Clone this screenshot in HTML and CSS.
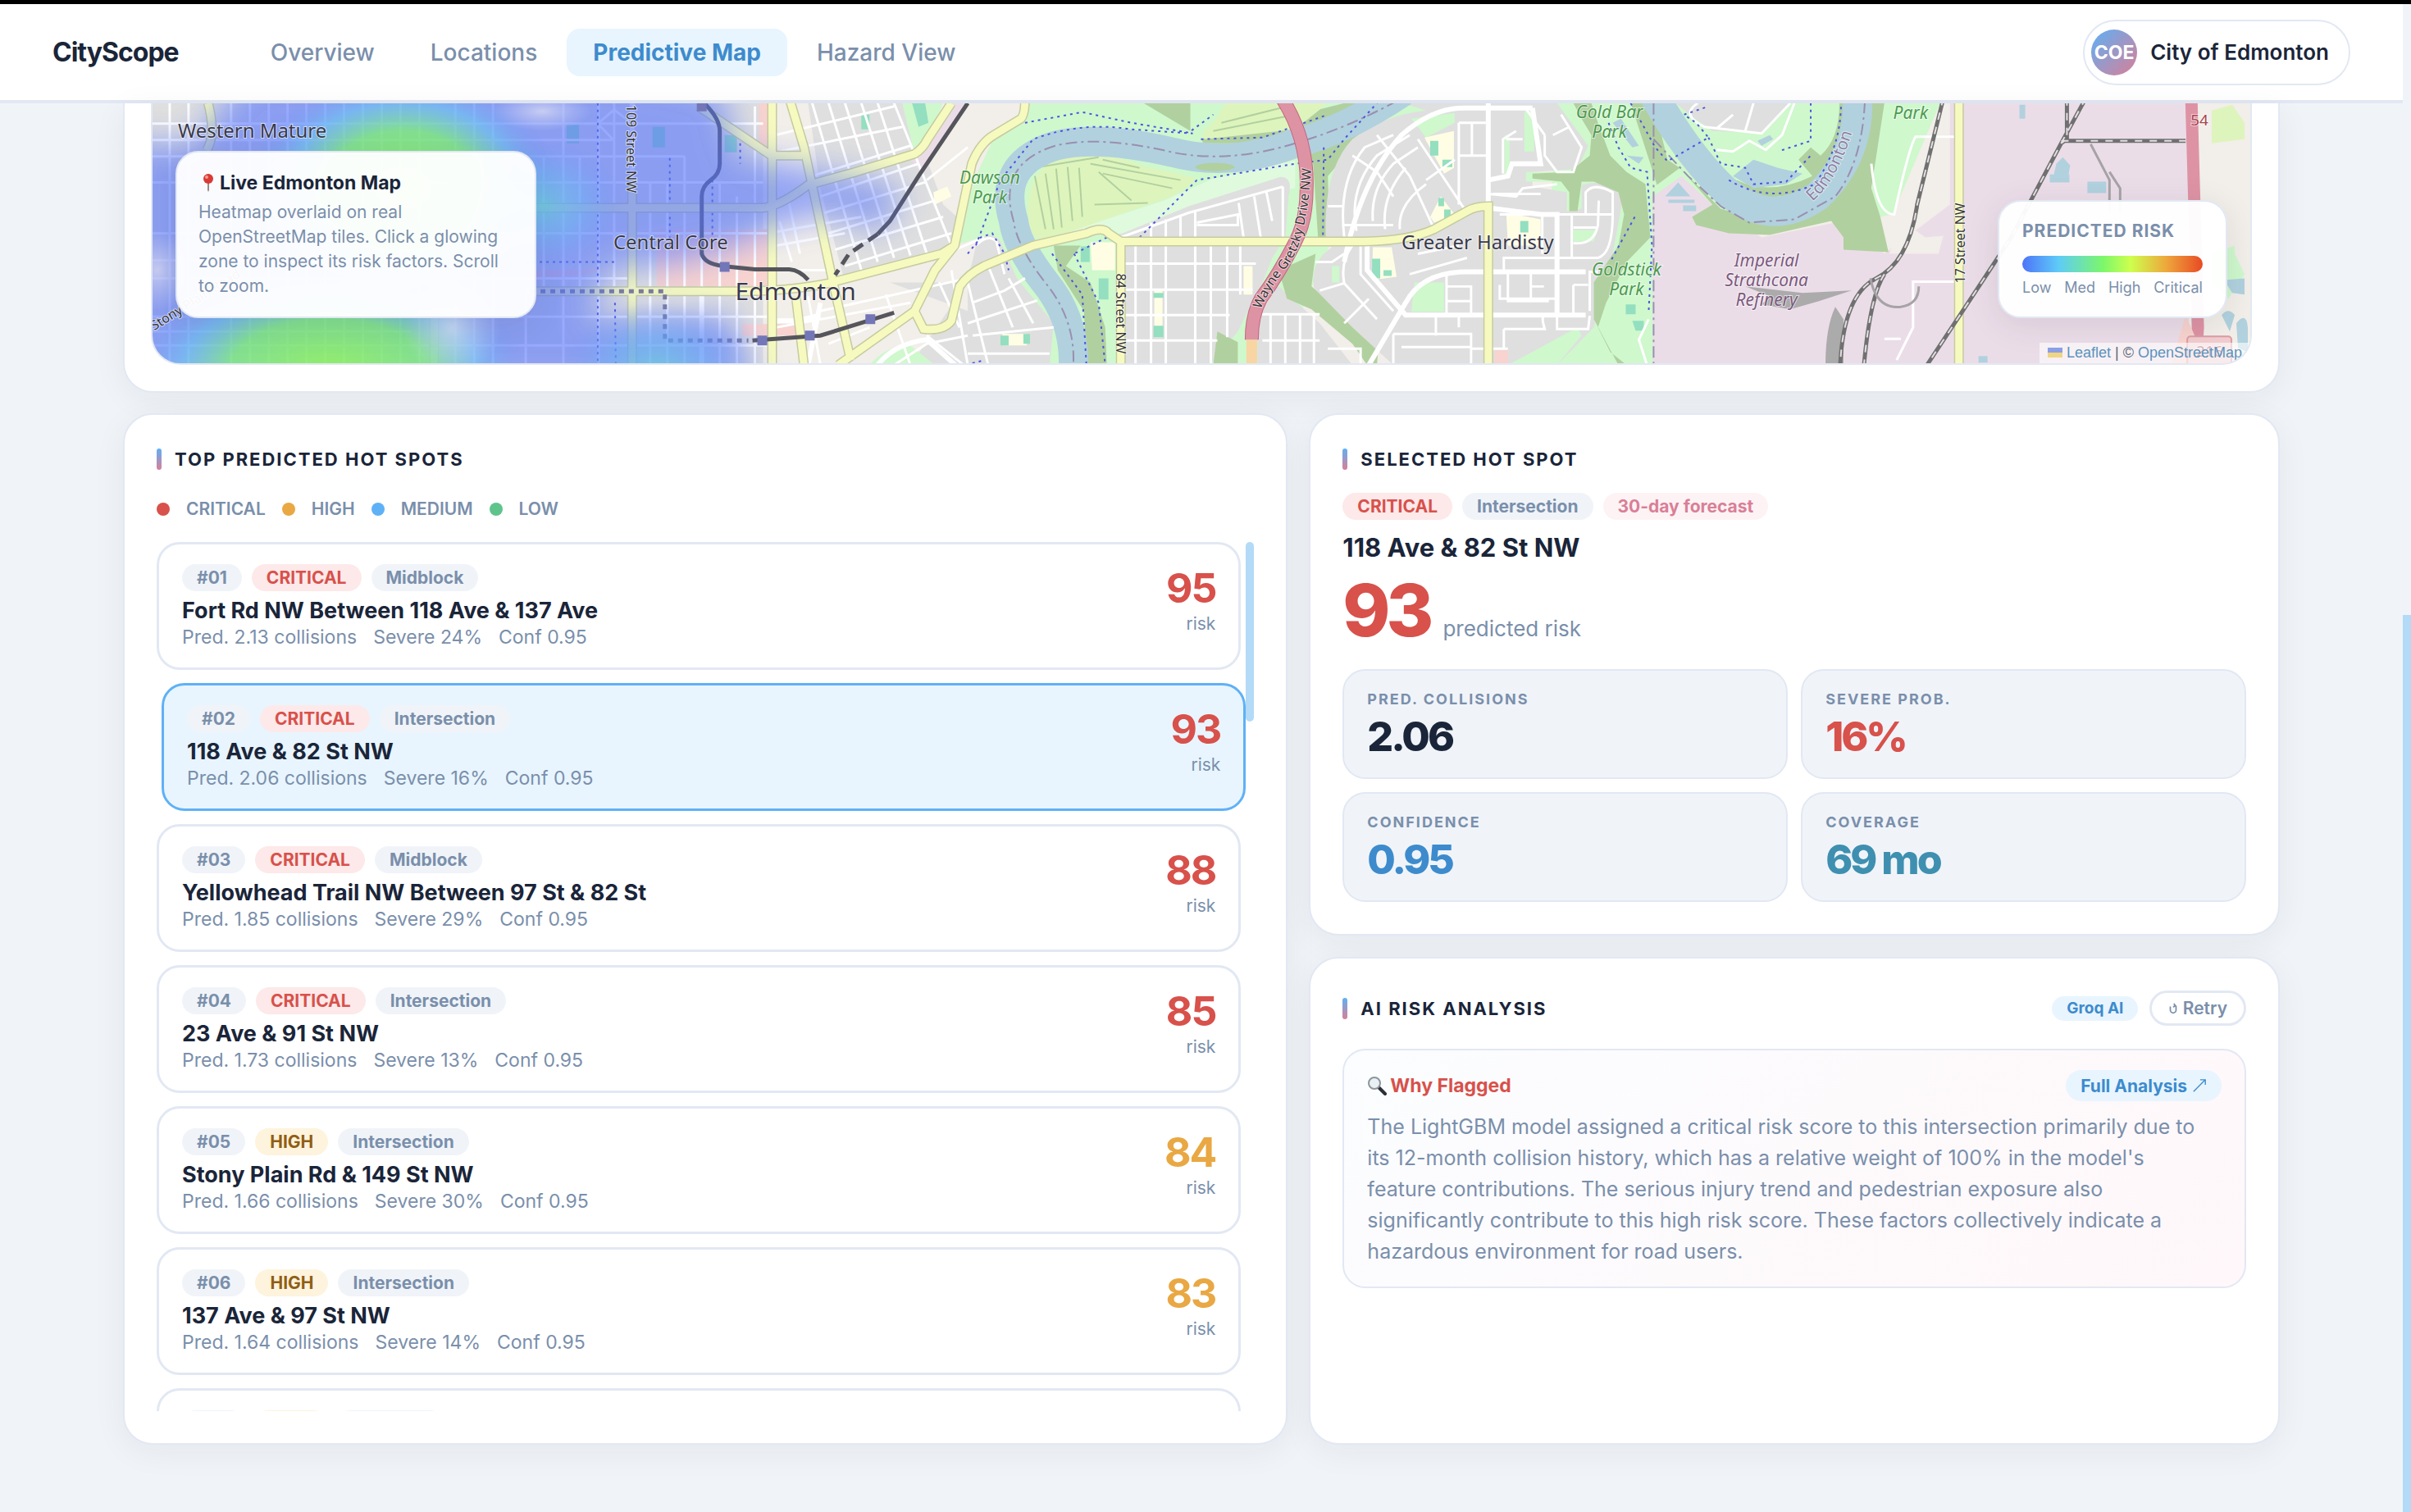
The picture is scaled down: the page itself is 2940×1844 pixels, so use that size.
FILE: index.html
```html
<!DOCTYPE html>
<html lang="en">
<head>
    <meta charset="UTF-8">
    <meta name="viewport" content="width=device-width, initial-scale=1">
    <title>CityScope - Predictive Map</title>
    <link rel="stylesheet" href="styles.css">
</head>
<body>

<div class="page">
    <!-- top bar -->
    <header class="topbar">
        <a class="logo" href="#">CityScope</a>
        <nav class="nav">
            <a href="#overview">Overview</a>
            <a href="#locations">Locations</a>
            <a class="active" href="#predictive">Predictive Map</a>
            <a href="#hazard">Hazard View</a>
        </nav>
        <button class="account"><span class="avatar">COE</span>City of Edmonton</button>
    </header>

    <main class="content">
        <!-- map -->
        <section class="card map-card">
            <div class="map">
                <svg class="map-canvas" viewBox="184 126 2563 318" preserveAspectRatio="xMidYMid slice">
                    <defs>
                        <radialGradient id="hot">
                            <stop offset="0" stop-color="#93ff4a" stop-opacity=".8"/>
                            <stop offset=".5" stop-color="#80fb68" stop-opacity=".7"/>
                            <stop offset=".75" stop-color="#66cdf2" stop-opacity=".5"/>
                            <stop offset="1" stop-color="#6f92f8" stop-opacity="0"/>
                        </radialGradient>
                        <radialGradient id="cool">
                            <stop offset="0" stop-color="#62d8d8" stop-opacity=".6"/>
                            <stop offset=".5" stop-color="#66b8f4" stop-opacity=".4"/>
                            <stop offset="1" stop-color="#6f92f8" stop-opacity="0"/>
                        </radialGradient>
                        <radialGradient id="pale">
                            <stop offset="0" stop-color="#f0ecf2" stop-opacity=".6"/>
                            <stop offset="1" stop-color="#d9d9f6" stop-opacity="0"/>
                        </radialGradient>
                        <filter id="soft" x="-20%" y="-20%" width="140%" height="140%"><feGaussianBlur stdDeviation="20"/></filter>
                        <g id="primary">
                            <path d="M941 120V446M640 254H930Q950 252 985 226L1040 211L1115 188Q1125 182 1131 170L1160 126M640 356H898Q960 356 1010 346L1148 310L1164 300M962 120L980 180L1015 343L1037 440M851 130L940 190L978 190M970 362L980 446M770 220V446M1022 446L1115 380L1140 330L1164 300L1185 200Q1195 175 1212 165L1245 145Q1250 140 1250 120M1115 380L1126 402Q1150 405 1160 392L1170 350Q1180 335 1200 325L1260 300L1325 285Q1345 276 1352 285L1367 295H1665Q1720 294 1750 280L1790 258Q1800 252 1816 252V446M1367 295V446M252 126Q262 165 250 184M528 388V446M2391 120V446"/>
                        </g>
                        <g id="rail">
                            <path d="M2372 120L2340 250Q2330 320 2290 340Q2250 360 2246 446M2546 120L2516 175L2455 290L2352 446M2523 120V170L2516 175M2300 335Q2283 360 2275 446M2516 172H2668"/>
                        </g>
                        <g id="drive">
                            <path d="M1564 120Q1596 170 1594 230Q1594 270 1580 296Q1560 335 1538 365Q1527 385 1527 415"/>
                        </g>
                        <path id="drive-label" d="M1538 378Q1550 350 1574 321Q1596 285 1600 200"/>
                        <path id="river-label" d="M2212 246Q2244 220 2264 150"/>
                    </defs>

                    <rect class="land" x="184" y="126" width="2563" height="318"/>
                    <path class="homes" d="M184 126H930V446H184Z"/>
                    <path class="homes" d="M985 126H1105L1150 250L1178 275L1164 300L1030 345L1000 230Z"/>
                    <path class="homes" d="M1180 345H1085L1180 380V446H1110Z"/>
                    <path class="commerce" d="M925 126H938V185H925ZM740 330L640 345V330ZM800 280H935V350H800ZM905 396H970V410H905ZM940 396H968V410H942Z"/>
                    <path class="industry" d="M1160 126H1180L1150 170L1125 215L1108 190Z"/>

                    <!-- river valley -->
                    <path class="park" d="M1254 126H1762L1690 160L1640 200L1622 300L1560 446H1180L1182 330L1196 290L1164 300L1190 215L1212 168L1250 145Z"/>
                    <path class="park" d="M1100 126H1150L1125 180H1113ZM1060 446Q1080 422 1110 422L1140 446Z"/>
                    <path class="meadow" d="M1280 290L1420 245L1480 218L1580 196V230L1450 255L1370 285Z"/>
                    <path class="homes" d="M1362 288L1450 252L1562 216Q1578 216 1572 240L1568 290L1552 315L1540 345L1510 405L1476 446H1370V300Z"/>
                    <path class="homes" d="M1180 345L1190 300Q1205 278 1220 295L1240 340L1285 395L1280 446H1180ZM1534 360L1560 350L1610 395L1650 446H1534Z"/>
                    <path class="wood" d="M1395 126H1452V160ZM1690 126H1640L1465 170L1468 175H1590L1602 200L1608 290H1622L1620 215L1650 180L1690 140ZM1285 300H1318L1300 325L1330 345L1348 400L1350 446H1325L1322 380L1290 330ZM1560 330L1605 310L1600 350L1630 375L1682 420L1680 446H1668L1650 420L1600 378L1570 365ZM1485 405L1510 418V446H1480Z"/>
                    <path class="golf" d="M1255 290Q1245 210 1290 195Q1340 180 1395 203L1458 217Q1450 235 1400 250L1300 285L1270 292ZM1495 126H1620L1580 158L1470 170Q1460 165 1480 150Z"/>
                    <path class="furrow" d="M1262 215L1275 280M1275 212L1285 280M1288 206L1295 278M1302 204L1308 270M1316 205L1320 265M1262 205L1340 192M1340 210L1380 245M1330 200L1440 220M1345 212L1430 230M1335 250L1400 248M1345 195L1390 205M1480 160L1580 140M1490 150L1570 130"/>

                    <!-- eastern neighbourhoods -->
                    <path class="park" d="M1900 126H2130V446H1880Z"/>
                    <path class="homes" d="M1618 300Q1612 210 1650 170Q1690 140 1740 135L1712 126H1900L1938 178L1925 206L1870 210V228L1912 235V258L1930 255V226Q1970 215 1980 245L1968 310L1945 400L1900 446H1700L1650 400L1603 352Q1598 320 1625 302Z"/>
                    <path class="park" d="M1860 136H1872V185H1860ZM1836 165H1842V215H1836ZM1722 145L1775 138V150L1740 168ZM1726 345H1762V381H1722ZM1918 281H1950L1945 295H1920ZM1625 325H1634V345H1625ZM1862 210H1925V222H1862ZM1840 446L1900 446L1930 410L1925 400Z"/>
                    <path class="school" d="M1738 168L1774 160V205L1762 212ZM1745 265L1758 240L1775 262L1750 272ZM1838 260L1880 268V300H1840ZM1675 302H1698L1704 338L1674 342ZM1330 296H1360V330H1332ZM1408 355H1418V412H1408ZM1517 325H1528V360H1517ZM1222 408H1252V422H1226ZM1138 235L1155 228L1160 240L1140 250Z"/>
                    <path class="pitch" d="M1745 172H1755V190H1745ZM1760 195H1772V204H1760ZM1755 242H1762V252H1755ZM1762 256H1770V268H1762ZM1855 270H1865V284H1855ZM1318 301H1329V320H1318ZM1340 340H1352V366H1340ZM1407 358H1419V364H1407ZM1407 398H1419V412H1407ZM1674 316H1684V340H1674ZM1688 330H1698V337H1688ZM1112 126H1128L1132 150L1120 155ZM1220 410H1230V422H1220ZM1248 408H1256V420H1248ZM690 152H705V175H690ZM795 155H810V180H795ZM883 165H898V186H883ZM1050 140H1060V158H1050ZM1984 372H1996V384H1984ZM1992 392H2006V404H1996ZM2194 126H2208V150H2200ZM2214 148H2226V158H2214Z"/>
                    <path class="wood" d="M1920 126H1942L1950 150L1965 190L1985 210L2008 225L2014 290L1985 320L1960 370L1950 400L1965 430L1985 446H1975L1945 390V345L1975 300L1982 262L1975 235L1945 222H1930L1925 258H1915V235L1905 222L1870 218V212L1915 210L1940 190L1942 165L1930 145ZM1990 126H2018L2035 195L2050 205L2022 226L2014 200Z"/>
                    <path class="industry" d="M2017 240L2052 215L2090 250L2150 290L2250 270L2300 310L2380 250V120H2672V446H2017Z"/>
                    <path class="park" d="M2300 126H2368L2310 262L2295 265L2284 240L2290 160Z"/>
                    <path class="wood" d="M2050 205L2090 250L2065 265L2070 275L2110 285L2160 287L2235 270L2250 290V305L2305 308L2295 265L2284 230L2300 126H2270Q2265 200 2230 240L2150 270L2100 255Z"/>
                    <path class="park" d="M2045 126H2250Q2252 200 2205 234Q2150 250 2110 220Z"/>
                    <path class="wood" d="M2110 225Q2160 255 2210 228Q2250 190 2250 126H2245Q2245 170 2222 190L2210 180L2195 195L2212 215Q2160 240 2120 220Z"/>
                    <path class="homes" d="M2045 126H2185L2150 162L2090 160L2062 140Z"/>
                    <path class="land" d="M2322 270L2350 290L2372 288L2366 310H2306ZM2693 120H2747V446H2693Z"/>
                    <path class="golf" d="M2700 135L2725 128L2740 150V170L2700 175Z"/>
                    <path class="park" d="M2700 310L2728 300V310L2740 335L2720 365L2700 345Z"/>

                    <!-- water -->
                    <path class="river" d="M1712 112Q1640 160 1580 175Q1500 205 1430 186Q1340 165 1287 178Q1215 200 1236 270Q1240 300 1273 343Q1312 390 1309 450"/>
                    <path class="river" d="M2016 112Q2060 190 2105 232Q2160 280 2218 240Q2272 190 2267 112"/>
                    <path class="water" d="M2048 223L2063 240H2032ZM2036 244H2068V248H2036ZM2054 251H2070V258H2054ZM1968 150L1978 145L2000 178L1992 180ZM1985 190L2006 192L2000 200ZM2145 172L2160 165L2164 170L2150 178ZM2115 215L2140 195L2170 205L2200 212L2180 225L2140 230ZM2510 200L2518 192L2527 202L2525 213H2507ZM2502 213H2526V223H2502ZM2548 222H2571V236H2548ZM2465 128H2472V145H2465ZM2415 435H2426V443H2415ZM2715 342L2740 340V360L2725 358ZM2712 385Q2720 375 2728 385L2722 405ZM2730 395Q2742 380 2744 400V430L2732 425Z"/>
                    <ellipse class="wood" cx="1482" cy="204" rx="24" ry="5"/>
                    <path class="border-line" d="M1705 123Q1640 158 1580 175Q1500 200 1430 186Q1340 165 1287 178Q1215 200 1236 270Q1240 300 1273 343Q1312 390 1309 446M2018 126V446M2018 170L2060 215L2100 252L2135 272L2190 268L2240 240Q2272 200 2276 126"/>

                    <!-- streets -->
                    <path class="street" d="M184 151H930M184 171H745M184 191H834M184 223H930M184 285H935L1050 265M184 318H600M184 340H770M184 387H935M184 422H935M205 126V446M228 126V446M280 126V446M303 126V446M326 126V446M349 126V446M372 126V446M395 126V446M418 126V446M441 126V446M464 126V446M487 126V446M510 126V446M554 126V446M577 126V446M600 126V446M640 356V446M662 191V356M686 126V446M706 191V356M729 126V446M748 126V350M792 223V446M813 223V446M834 191V446M855 240V446M877 223V446M898 240V446M920 130V446M184 405H500M728 151L748 134L770 151M728 151L748 172V223"/>
                    <path class="street" d="M945 165L1090 130M950 185L1100 155M990 215L1110 178M1000 240L1120 200M1005 260L1130 222M1010 285L1140 245M1018 305L1150 265M1030 325L1160 285M946 300L1030 285M990 126L1050 330M1010 126L1070 320M1030 126L1090 315M1050 126L1110 312M1070 126L1130 310M1090 126L1160 300M960 240L975 310M950 270L965 320M946 330H1010M946 400L1110 370M1000 380L1180 340M985 362L1000 446M1010 420L1060 400M1080 360L1110 446M1130 320L1200 290M1145 345L1170 400M1160 330L1180 446M1090 446L1130 420L1180 410M1130 220L1180 180"/>
                    <path class="street" d="M1180 395L1265 367M1185 370L1225 355L1250 340M1186 410L1285 400M1180 345L1205 446M1205 325L1235 400M1230 340L1260 395M1195 330L1235 310M1190 300Q1205 285 1215 295L1225 335M1180 432H1280M1130 410L1175 446"/>
                    <path class="street" d="M1367 322H1532M1367 354H1528M1367 385H1500M1367 416H1485M1385 290V446M1404 272V446M1422 268V446M1458 258V446M1477 300V446M1497 300V412M1513 300V360M1440 265V290M1367 290L1450 260L1565 228M1511 248L1517 290M1530 240L1538 290M1545 235L1552 270M1565 228V290M1460 272L1510 262V275H1460M1535 384H1610M1550 384V446M1568 384V446M1586 384V446M1603 384V446M1540 416H1610M1620 426H1660V446"/>
                    <path class="street" d="M1640 290Q1632 220 1665 180L1700 165M1655 282Q1645 230 1680 190L1720 165M1675 270Q1672 230 1700 200L1730 180M1690 280Q1685 240 1715 205M1708 280Q1705 250 1740 225M1680 165L1720 215M1700 240L1680 210L1650 190M1720 215L1750 280M1730 170L1790 260M1740 220L1775 195M1640 275H1700M1620 252H1640M1605 320H1625L1640 310M1610 355L1640 346L1680 390M1640 346Q1635 320 1650 300M1660 300V335L1700 380M1640 395L1670 365"/>
                    <path class="street" d="M1780 150V250M1780 150H1816M1796 150V190M1780 190H1816M1838 170H1858M1834 212V170L1850 160M1822 237H1880M1816 237L1850 240L1858 230L1900 225M1885 165V190L1900 210H1920L1930 180L1905 140M1885 165L1860 130M1895 165L1915 155M1900 262V382M1830 262L1882 262M1882 262V310M1918 262V315M1900 262H1968M1920 278H1950M1920 297Q1945 300 1950 275L1951 245M1935 262V235Q1945 222 1968 235V262Q1968 310 1950 315H1835V330M1950 332H1940V380M1830 348V365H1900M1765 334V386M1765 350H1795V386M1765 368H1795M1840 332V368H1890M1868 332V368M1868 350H1884M1920 348V385M1920 348H1938M1700 408V446M1700 408H1795V446M1752 386V410M1780 386V400M1795 426H1840M1710 424H1795M1835 402V425M1835 402H1885Q1880 386 1885 386M1900 386V402H1938L1940 386M1720 335L1790 315M1730 310L1780 300M2072 126Q2050 140 2080 155L2150 163L2185 126M2095 157L2115 140M2130 160L2140 126"/>
                    <path class="street wide" d="M1816 120V252M1640 320Q1660 220 1710 165Q1750 130 1790 132H1870M1870 132L1880 200H1845L1840 215L1816 220M1816 254L1880 262H1900V386M1668 290V330L1715 385H1935M1670 446L1715 370Q1735 332 1790 332H1935M941 392H970L1000 385M985 446L1000 370M1070 446Q1090 420 1130 415L1165 446M855 350V446M770 126V220"/>
                    <path class="street" d="M2095 183L2115 185L2135 172L2155 183L2175 165L2190 126M2284 200Q2290 262 2312 262Q2330 180 2338 167L2391 167M2391 344H2335V400L2315 440M2300 414H2320M2012 390L2000 415L2010 446"/>
                    <path class="works" d="M2130 350L2200 358L2260 355L2220 368L2185 378L2150 372L2160 362ZM2228 446Q2228 400 2240 375L2250 390V446Z"/>
                    <path class="path-dots" d="M1250 150L1320 137L1380 150L1450 162L1480 140M1190 300L1205 260L1220 220L1260 170Q1320 148 1380 158L1455 163M1465 170L1540 168L1620 140M1390 290L1440 240L1460 220L1580 200L1620 195L1640 170L1680 126M1283 310L1320 360L1325 446M1310 310L1340 370L1348 446M1350 290L1310 310M1615 180L1614 290M1963 150L1975 180L1990 205L2010 210L2016 300L2012 380M1990 126L2020 180L2035 197L2085 168L2070 150L2055 140L2085 130M2085 168L2100 200L2130 205L2140 225L2180 222L2210 190M2110 220Q2160 250 2215 225Q2247 180 2247 126M2210 126V172L2170 185M1995 265L1965 320M748 320H640M816 300V190M749 370L750 446M728 126V446M868 220V300M902 175V200M1178 446L1200 440M1180 310L1196 290L1210 285L1225 310L1230 330"/>

                    <!-- main roads -->
                    <use href="#primary" class="road-edge"/>
                    <use href="#primary" class="road"/>
                    <use href="#drive" class="drive-edge"/>
                    <use href="#drive" class="drive"/>
                    <path class="secondary" d="M1527 415V446"/>
                    <path class="drive" d="M2675 120L2683 400L2680 446"/>
                    <path class="commerce" d="M2668 385L2695 446H2650ZM1824 428H1840V446H1824Z"/>
                    <use href="#rail" class="rail"/>
                    <use href="#rail" class="rail-dash"/>
                    <path class="siding" d="M2552 176L2575 220V260M2575 210L2588 230V260M2283 340Q2290 378 2320 375Q2342 372 2342 350"/>
                    <path class="lrt" d="M858 126Q877 145 877 160V200Q877 212 866 220Q855 228 855 240V310Q858 322 880 325L920 329H962Q975 330 985 342M1180 126L1120 215L1085 270L1070 286M917 416L1000 410L1090 382"/>
                    <path class="lrt dashed" d="M1070 286L1035 310L1018 336"/>
                    <path class="lrt dots" d="M646 356H810V416H912"/>

                    <!-- heat -->
                    <g class="heat">
                        <path filter="url(#soft)" d="M300 90H800L880 110L900 190L960 200L1000 210L1100 230L1080 280L1000 260L925 285L900 300L830 320L740 330L720 390L890 385L920 470H150V170L230 180Z"/>
                    </g>
                    <ellipse fill="url(#hot)" cx="490" cy="230" rx="190" ry="140"/>
                    <ellipse fill="url(#hot)" cx="400" cy="450" rx="240" ry="120"/>
                    <ellipse fill="url(#cool)" cx="800" cy="450" rx="120" ry="80"/>
                    <ellipse fill="url(#cool)" cx="660" cy="250" rx="100" ry="80"/>
                    <ellipse fill="url(#pale)" cx="660" cy="136" rx="60" ry="24"/>
                    <ellipse fill="url(#pale)" cx="550" cy="400" rx="60" ry="60"/>
                    <ellipse fill="url(#pale)" cx="190" cy="330" rx="40" ry="50"/>
                    <path class="station" d="M849 126H861V136H849ZM877 320H889V332H877ZM923 410H935V422H923ZM981 404H993V416H981ZM1055 384H1067V396H1055Z"/>

                    <!-- labels -->
                    <text class="place" x="215" y="168">Western Mature</text>
                    <text class="place" x="747" y="305">Central Core</text>
                    <text class="place big" x="896" y="367">Edmonton</text>
                    <text class="place" x="1710" y="305">Greater Hardisty</text>
                    <text class="street-name" transform="translate(763 128) rotate(90)">109 Street NW</text>
                    <text class="street-name" transform="translate(1361 334) rotate(90)">84 Street NW</text>
                    <text class="street-name" transform="translate(2398 346) rotate(-90)">17 Street NW</text>
                    <text class="street-name" transform="translate(186 404) rotate(-32)">Stony Plain Road</text>
                    <text class="street-name"><textPath href="#drive-label">Wayne Gretzky Drive NW</textPath></text>
                    <text class="river-name"><textPath href="#river-label">Edmonton</textPath></text>
                    <g class="park-name">
                        <text x="1207" y="224">Dawson</text>
                        <text x="1207" y="248">Park</text>
                        <text x="1964" y="144">Gold Bar</text>
                        <text x="1964" y="168">Park</text>
                        <text x="1985" y="337">Goldstick</text>
                        <text x="1985" y="361">Park</text>
                        <text x="2332" y="145">Park</text>
                    </g>
                    <g class="works-name">
                        <text x="2156" y="326">Imperial</text>
                        <text x="2156" y="350">Strathcona</text>
                        <text x="2156" y="374">Refinery</text>
                    </g>
                    <text class="shield" x="2674" y="153">54</text>
                    <rect class="shield-box" x="2670" y="411" width="54" height="40" rx="4"/>
                    <text class="shield" x="2681" y="436">216</text>
                </svg>

                <div class="map-panel map-info">
                    <h3>
                        <svg class="pin" viewBox="0 0 12 22"><path d="M5 9H7V20L6 22L5 20Z" fill="#9b8a86"/><circle cx="6" cy="6" r="6" fill="#d93a35"/><circle cx="4" cy="4" r="2" fill="#f59a93"/></svg>
                        Live Edmonton Map
                    </h3>
                    <p>Heatmap overlaid on real OpenStreetMap tiles. Click a glowing zone to inspect its risk factors. Scroll to zoom.</p>
                </div>
                <div class="map-panel map-legend">
                    <h3>Predicted Risk</h3>
                    <div class="ramp"></div>
                    <div class="ramp-labels"><span>Low</span><span>Med</span><span>High</span><span>Critical</span></div>
                </div>
                <div class="attribution">
                    <svg class="flag" viewBox="0 0 18 12"><path fill="#8b9fe4" d="M0 0H18V6H0Z"/><path fill="#f0d583" d="M0 6H18V12H0Z"/></svg>
                    <a href="#leaflet">Leaflet</a> | © <a href="#osm">OpenStreetMap</a>
                </div>
            </div>
        </section>

        <div class="columns">
            <!-- hot spot list -->
            <section class="card spots">
                <h2>Top Predicted Hot Spots</h2>
                <div class="levels">
                    <i class="dot red"></i><span>CRITICAL</span>
                    <i class="dot amber"></i><span>HIGH</span>
                    <i class="dot blue"></i><span>MEDIUM</span>
                    <i class="dot green"></i><span>LOW</span>
                </div>
                <div class="scroller">
                    <ul class="spot-list">
                        <li>
                            <button class="spot">
                                <span class="info">
                                    <span class="pills"><span class="pill">#01</span><span class="pill critical">CRITICAL</span><span class="pill">Midblock</span></span>
                                    <span class="name">Fort Rd NW Between 118 Ave &amp; 137 Ave</span>
                                    <span class="facts"><span>Pred. 2.13 collisions</span><span>Severe 24%</span><span>Conf 0.95</span></span>
                                </span>
                                <span class="score critical"><b>95</b>risk</span>
                            </button>
                        </li>
                        <li>
                            <button class="spot selected">
                                <span class="info">
                                    <span class="pills"><span class="pill">#02</span><span class="pill critical">CRITICAL</span><span class="pill">Intersection</span></span>
                                    <span class="name">118 Ave &amp; 82 St NW</span>
                                    <span class="facts"><span>Pred. 2.06 collisions</span><span>Severe 16%</span><span>Conf 0.95</span></span>
                                </span>
                                <span class="score critical"><b>93</b>risk</span>
                            </button>
                        </li>
                        <li>
                            <button class="spot">
                                <span class="info">
                                    <span class="pills"><span class="pill">#03</span><span class="pill critical">CRITICAL</span><span class="pill">Midblock</span></span>
                                    <span class="name">Yellowhead Trail NW Between 97 St &amp; 82 St</span>
                                    <span class="facts"><span>Pred. 1.85 collisions</span><span>Severe 29%</span><span>Conf 0.95</span></span>
                                </span>
                                <span class="score critical"><b>88</b>risk</span>
                            </button>
                        </li>
                        <li>
                            <button class="spot">
                                <span class="info">
                                    <span class="pills"><span class="pill">#04</span><span class="pill critical">CRITICAL</span><span class="pill">Intersection</span></span>
                                    <span class="name">23 Ave &amp; 91 St NW</span>
                                    <span class="facts"><span>Pred. 1.73 collisions</span><span>Severe 13%</span><span>Conf 0.95</span></span>
                                </span>
                                <span class="score critical"><b>85</b>risk</span>
                            </button>
                        </li>
                        <li>
                            <button class="spot">
                                <span class="info">
                                    <span class="pills"><span class="pill">#05</span><span class="pill high">HIGH</span><span class="pill">Intersection</span></span>
                                    <span class="name">Stony Plain Rd &amp; 149 St NW</span>
                                    <span class="facts"><span>Pred. 1.66 collisions</span><span>Severe 30%</span><span>Conf 0.95</span></span>
                                </span>
                                <span class="score high"><b>84</b>risk</span>
                            </button>
                        </li>
                        <li>
                            <button class="spot">
                                <span class="info">
                                    <span class="pills"><span class="pill">#06</span><span class="pill high">HIGH</span><span class="pill">Intersection</span></span>
                                    <span class="name">137 Ave &amp; 97 St NW</span>
                                    <span class="facts"><span>Pred. 1.64 collisions</span><span>Severe 14%</span><span>Conf 0.95</span></span>
                                </span>
                                <span class="score high"><b>83</b>risk</span>
                            </button>
                        </li>
                        <li>
                            <button class="spot">
                                <span class="info">
                                    <span class="pills"><span class="pill">#07</span><span class="pill high">HIGH</span><span class="pill">Midblock</span></span>
                                </span>
                            </button>
                        </li>
                    </ul>
                    <div class="list-thumb"></div>
                </div>
            </section>

            <div class="side">
                <!-- selected spot -->
                <section class="card detail">
                    <h2>Selected Hot Spot</h2>
                    <div class="pills"><span class="pill critical">CRITICAL</span><span class="pill">Intersection</span><span class="pill forecast">30-day forecast</span></div>
                    <h3 class="detail-name">118 Ave &amp; 82 St NW</h3>
                    <p class="detail-score"><b>93</b>predicted risk</p>
                    <dl class="metrics">
                        <div><dt>Pred. Collisions</dt><dd>2.06</dd></div>
                        <div><dt>Severe Prob.</dt><dd class="red-text">16%</dd></div>
                        <div><dt>Confidence</dt><dd class="blue-text">0.95</dd></div>
                        <div><dt>Coverage</dt><dd class="teal-text">69 mo</dd></div>
                    </dl>
                </section>

                <!-- ai analysis -->
                <section class="card analysis">
                    <div class="analysis-head">
                        <h2>AI Risk Analysis</h2>
                        <span class="badge">Groq AI</span>
                        <button class="retry">
                            <svg viewBox="0 0 12 16"><path d="M2 5V10A4 4 0 0 0 10 10V5Q9 3 7 4M7 1L9 4L6 6" fill="none" stroke="currentColor" stroke-width="2"/></svg>
                            Retry
                        </button>
                    </div>
                    <div class="why">
                        <div class="why-head">
                            <h3>
                                <svg viewBox="0 0 24 24"><path d="M14 14L22 22" stroke="#2b2f36" stroke-width="4" stroke-linecap="round"/><circle cx="9" cy="9" r="7" fill="#e9f1f5" stroke="#8d959c" stroke-width="2"/></svg>
                                Why Flagged
                            </h3>
                            <button class="full">
                                Full Analysis
                                <svg viewBox="0 0 20 20"><path d="M2 18L18 2M11 2H18V9" fill="none" stroke="currentColor" stroke-width="1.5"/></svg>
                            </button>
                        </div>
                        <p>The LightGBM model assigned a critical risk score to this intersection primarily due to its 12-month collision history, which has a relative weight of 100% in the model's feature contributions. The serious injury trend and pedestrian exposure also significantly contribute to this high risk score. These factors collectively indicate a hazardous environment for road users.</p>
                    </div>
                </section>
            </div>
        </div>
    </main>
</div>
<div class="page-scroll"></div>

</body>
</html>
```
FILE: styles.css
```css
/* reset */
* {
    box-sizing: border-box;
}
body, h2, h3, p, ul, dl, dd {
    margin: 0;
    padding: 0;
}
ul {
    list-style: none;
}
a {
    text-decoration: none;
}
button {
    border: 0;
    background: none;
    color: inherit;
    font: inherit;
    text-align: left;
    cursor: pointer;
}

body {
    display: flex;
    min-height: 100vh;
    border-top: 5px solid #000;
    background: #f0f4f8;
    color: #1a2539;
    font-family: Inter, "Noto Sans", sans-serif;
    font-size: 22px;
}
.page {
    flex: 1;
    min-width: 0;
}
.page-scroll {
    width: 10px;
    margin-top: 745px;
    background: #b3daf7;
}

/* top bar */
.topbar {
    display: flex;
    align-items: center;
    height: 121px;
    padding: 0 64px;
    border-bottom: 4px solid #e2e8f3;
    background: #fff;
}
.logo {
    margin-right: 80px;
    color: #1a2539;
    font-size: 32px;
    font-weight: 700;
    letter-spacing: -1px;
}
.nav {
    display: flex;
    flex: 1;
    gap: 4px;
}
.nav a {
    padding: 0 32px;
    border-radius: 16px;
    color: #7a8fab;
    font-size: 28px;
    font-weight: 500;
    line-height: 58px;
}
.nav .active {
    background: #e8f5fe;
    color: #3d8bcd;
    font-weight: 700;
}
.account {
    display: flex;
    align-items: center;
    gap: 16px;
    height: 80px;
    padding: 0 24px 0 8px;
    border: 2px solid #e2e8f3;
    border-radius: 40px;
    font-size: 26px;
    font-weight: 600;
}
.avatar {
    width: 56px;
    border-radius: 50%;
    background: linear-gradient(135deg, #5eb0f5, #d97f97);
    color: #fff;
    font-size: 23px;
    font-weight: 700;
    line-height: 56px;
    text-align: center;
}

/* cards */
.content {
    padding: 0 150px 80px;
}
.card {
    padding: 39px;
    border: 2px solid #e2e8f3;
    border-radius: 36px;
    background: #fff;
    box-shadow: 0 8px 40px rgba(26, 37, 57, .06);
}
h2 {
    display: flex;
    align-items: center;
    gap: 16px;
    font-size: 22px;
    font-weight: 700;
    line-height: 30px;
    letter-spacing: 2px;
    text-transform: uppercase;
}
h2::before {
    content: "";
    width: 6px;
    height: 26px;
    border-radius: 3px;
    background: linear-gradient(#5eb0f5, #d97f97);
}

/* map */
.map-card {
    margin-bottom: 25px;
    padding: 0 32px 32px;
    border-top: 0;
    border-radius: 0 0 36px 36px;
}
.map {
    position: relative;
    height: 319px;
    overflow: hidden;
    border: 2px solid #e2e8f3;
    border-top: 0;
    border-radius: 0 0 36px 36px;
}
.map-canvas {
    display: block;
    width: 100%;
    height: 100%;
    font-family: "Noto Sans", sans-serif;
}
.map-panel {
    position: absolute;
    bottom: 55px;
    border: 2px solid #e2e8f3;
    border-radius: 28px;
    background: rgba(255, 255, 255, .96);
    box-shadow: 0 8px 40px rgba(26, 37, 57, .1);
}
.map-info {
    left: 28px;
    width: 440px;
    padding: 20px 26px 22px;
    color: #7a8fab;
    font-size: 21px;
    line-height: 30px;
}
.map-info h3 {
    display: flex;
    align-items: center;
    gap: 8px;
    padding-bottom: 4px;
    color: #1a2539;
    font-size: 23px;
    font-weight: 700;
    line-height: 34px;
}
.pin {
    width: 12px;
    height: 22px;
    margin-left: 6px;
}
.map-legend {
    right: 28px;
    width: 280px;
    padding: 20px 28px 22px;
    color: #7a8fab;
    font-size: 18px;
}
.map-legend h3 {
    margin-bottom: 14px;
    font-size: 21px;
    font-weight: 700;
    line-height: 32px;
    letter-spacing: 1px;
    text-transform: uppercase;
}
.ramp {
    height: 20px;
    border-radius: 10px;
    background: linear-gradient(90deg, #4d74f8, #5ecbf8 20%, #7df76a 45%, #ceff4e 60%, #eea63c 80%, #e84a24);
}
.ramp-labels {
    display: flex;
    justify-content: space-between;
    padding-top: 6px;
    line-height: 26px;
}
.attribution {
    position: absolute;
    right: 0;
    bottom: 0;
    padding: 0 10px;
    background: rgba(255, 255, 255, .6);
    color: #5d6470;
    font-family: "Liberation Sans", Arial, sans-serif;
    font-size: 18px;
    line-height: 25px;
}
.attribution a {
    color: #5a93bd;
}
.flag {
    width: 18px;
    height: 12px;
}

/* map drawing */
.land { fill: #f2eee9; }
.homes { fill: #dfdfdf; }
.commerce { fill: #f8d3cf; }
.industry { fill: #ebdde8; }
.park { fill: #cff8cd; }
.meadow { fill: #e0fade; }
.wood { fill: #b1d09f; }
.golf { fill: #def4bd; }
.school { fill: #fffee5; }
.pitch { fill: #93dfc0; }
.water { fill: #b1d1de; }
.works { fill: #acabac; }
.station { fill: #7377b8; }
.furrow, .river, .border-line, .street, .path-dots, .road, .road-edge, .drive, .drive-edge, .secondary, .rail, .rail-dash, .siding, .lrt {
    fill: none;
}
.furrow {
    stroke: #b1d09f;
    stroke-width: 2;
}
.river {
    stroke: #b1d1de;
    stroke-width: 36;
}
.border-line {
    stroke: #9a8fb0;
    stroke-width: 2;
    stroke-dasharray: 14 5 3 5;
}
.street {
    stroke: #fff;
    stroke-width: 3;
}
.street.wide {
    stroke-width: 6;
}
.path-dots {
    stroke: #4a55e0;
    stroke-width: 2;
    stroke-dasharray: 3 5;
}
.road-edge {
    stroke: #c5cba0;
    stroke-width: 12;
}
.road {
    stroke: #f7fabf;
    stroke-width: 9;
}
.drive-edge {
    stroke: #c3667e;
    stroke-width: 17;
}
.drive {
    stroke: #de93a4;
    stroke-width: 15;
}
.secondary {
    stroke: #f8d5a3;
    stroke-width: 13;
}
.rail {
    stroke: #707070;
    stroke-width: 5;
}
.rail-dash {
    stroke: #e4dfe2;
    stroke-width: 2;
    stroke-dasharray: 9 9;
}
.siding {
    stroke: #a5a3a6;
    stroke-width: 3;
}
.lrt {
    stroke: #55555c;
    stroke-width: 5;
}
.lrt.dashed {
    stroke-dasharray: 14 8;
}
.lrt.dots {
    stroke: #7d7c96;
    stroke-dasharray: 6 6;
}
.heat {
    fill: #5674fb;
    opacity: .62;
}
.map-canvas text {
    paint-order: stroke;
    stroke: rgba(255, 255, 255, .6);
    stroke-width: 2px;
}
.place {
    fill: #393a4c;
    font-size: 24px;
}
.place.big {
    font-size: 30px;
}
.street-name {
    fill: #333;
    font-size: 16px;
}
.river-name {
    fill: #8d7fa3;
    font-size: 20px;
}
.park-name {
    fill: #4c9a4f;
    font-size: 21px;
    font-style: italic;
    text-anchor: middle;
}
.works-name {
    fill: #7c5a7e;
    font-size: 21px;
    font-style: italic;
    text-anchor: middle;
}
.shield {
    fill: #a8434c;
    font-size: 19px;
}
.shield-box {
    fill: #f1cdd0;
    stroke: #dc9da3;
    stroke-width: 2;
}

/* columns */
.columns {
    display: grid;
    grid-template-columns: 6fr 5fr;
    gap: 26px;
}
.side {
    display: flex;
    flex-direction: column;
    gap: 26px;
}
.analysis {
    flex: 1;
}

/* pills */
.pills {
    display: flex;
    gap: 12px;
}
.pill {
    padding: 0 18px;
    border-radius: 17px;
    background: #f0f4f9;
    color: #7a8fab;
    font-size: 21px;
    font-weight: 700;
    line-height: 33px;
}
.pill.critical {
    background: #fde9e9;
    color: #d8514b;
}
.pill.high {
    background: #fef3dc;
    color: #8f5e14;
}
.pill.forecast {
    background: #fdf3f5;
    color: #d97f97;
}

/* hot spot list */
.levels {
    display: flex;
    align-items: center;
    gap: 20px;
    margin: 32px 0 26px;
    color: #7a8fab;
    font-size: 21px;
    font-weight: 600;
    line-height: 28px;
}
.dot {
    width: 16px;
    height: 16px;
    border-radius: 50%;
}
.red { background: #d8514b; }
.amber { background: #e9a843; }
.blue { background: #5fb1f6; }
.green { background: #5fc48c; }
.scroller {
    display: flex;
    height: 1060px;
    overflow: hidden;
}
.spot-list {
    display: flex;
    flex: 1;
    flex-direction: column;
    gap: 16px;
    padding-right: 6px;
}
.list-thumb {
    width: 10px;
    height: 219px;
    border-radius: 5px;
    background: #b3daf7;
}
.spot {
    display: flex;
    width: 100%;
    height: 156px;
    padding: 24px 28px 20px;
    border: 3px solid #e2e8f3;
    border-radius: 28px;
    background: #fff;
}
.spot.selected {
    transform: translateX(6px);
    border-color: #5fb1f6;
    background: #e8f5fe;
}
.info {
    flex: 1;
}
.name {
    display: block;
    padding-top: 7px;
    font-size: 27px;
    font-weight: 700;
    line-height: 34px;
}
.facts {
    display: flex;
    gap: 20px;
    color: #7a8fab;
    font-size: 23px;
    line-height: 30px;
}
.score {
    color: #7a8fab;
    font-size: 21px;
    line-height: 30px;
    text-align: right;
}
.score b {
    display: block;
    font-size: 50px;
    line-height: 58px;
    letter-spacing: -2px;
}
.score.critical b { color: #d8514b; }
.score.high b { color: #e9a843; }

/* selected spot */
.detail .pills {
    margin-top: 26px;
}
.detail-name {
    padding-top: 14px;
    font-size: 31px;
    font-weight: 700;
    line-height: 40px;
}
.detail-score {
    display: flex;
    align-items: baseline;
    gap: 16px;
    padding: 12px 0 28px;
    color: #7a8fab;
    font-size: 26px;
}
.detail-score b {
    color: #d8514b;
    font-size: 88px;
    font-weight: 800;
    line-height: 88px;
    letter-spacing: -5px;
}
.metrics {
    display: grid;
    grid-template-columns: 1fr 1fr;
    gap: 16px;
}
.metrics div {
    height: 134px;
    padding: 20px 28px;
    border: 2px solid #e2e8f3;
    border-radius: 28px;
    background: #f0f4f9;
}
.metrics dt {
    color: #7a8fab;
    font-size: 18px;
    font-weight: 700;
    line-height: 30px;
    letter-spacing: 2px;
    text-transform: uppercase;
}
.metrics dd {
    font-size: 50px;
    font-weight: 800;
    line-height: 60px;
    letter-spacing: -3px;
}
.red-text { color: #d8514b; }
.blue-text { color: #3d8bcd; }
.teal-text { color: #3f8fb0; }

/* ai analysis */
.analysis-head {
    display: flex;
    align-items: center;
    gap: 14px;
}
.analysis-head h2 {
    flex: 1;
}
.badge {
    padding: 0 18px;
    border-radius: 15px;
    background: #e8f5fe;
    color: #3d8bcd;
    font-size: 19px;
    font-weight: 700;
    line-height: 30px;
}
.retry {
    height: 43px;
    padding: 0 20px;
    border: 3px solid #e2e8f3;
    border-radius: 22px;
    color: #7a8fab;
    font-size: 21px;
    font-weight: 600;
}
.retry svg {
    width: 12px;
    height: 14px;
}
.why {
    margin-top: 28px;
    padding: 24px 28px;
    border: 2px solid #e2e8f3;
    border-radius: 28px;
    background: linear-gradient(135deg, #fbfdff, #fff7f9);
}
.why-head {
    display: flex;
    align-items: center;
    justify-content: space-between;
    margin-bottom: 12px;
}
.why h3 {
    display: flex;
    align-items: center;
    gap: 4px;
    color: #d8514b;
    font-size: 23px;
    font-weight: 700;
}
.why h3 svg {
    width: 24px;
    height: 24px;
}
.full {
    display: flex;
    align-items: center;
    gap: 6px;
    height: 38px;
    padding: 0 18px;
    border-radius: 19px;
    background: #e8f5fe;
    color: #3d8bcd;
    font-size: 21px;
    font-weight: 700;
}
.full svg {
    width: 18px;
    height: 18px;
}
.why p {
    padding-right: 16px;
    color: #7a8fab;
    font-size: 25px;
    line-height: 38px;
}
```
